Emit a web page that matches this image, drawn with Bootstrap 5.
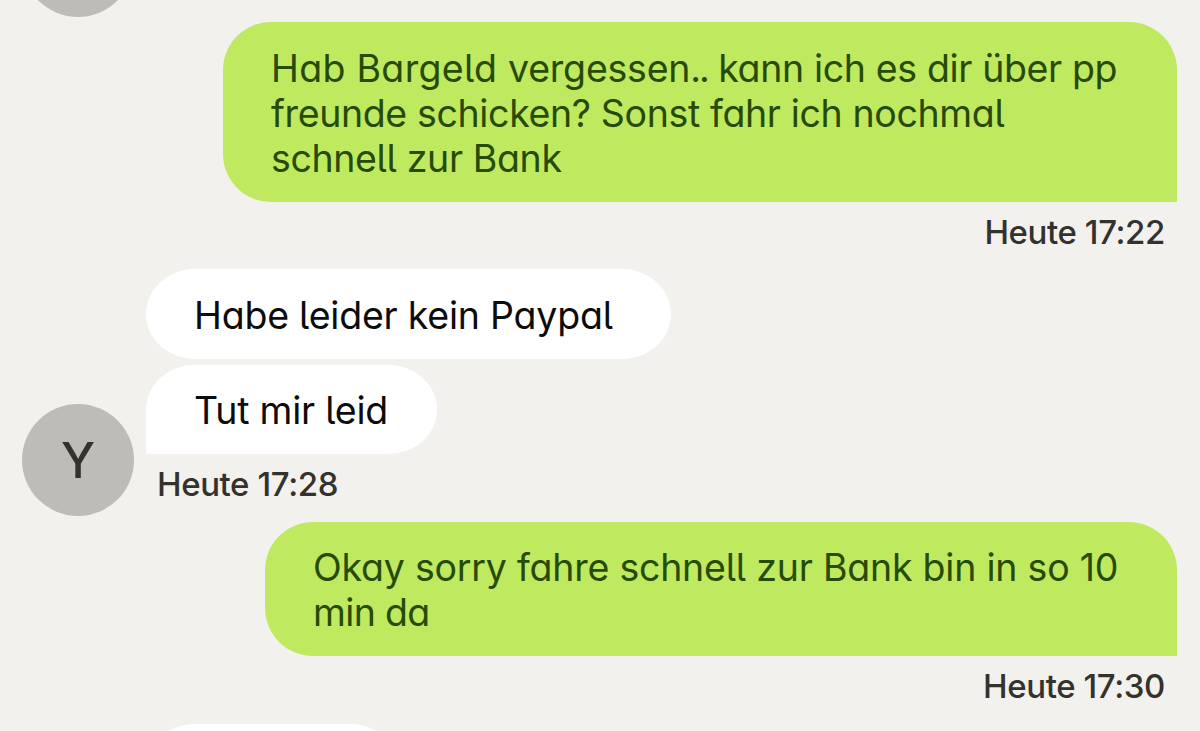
<!DOCTYPE html>
<html lang="de">
<head>
<meta charset="utf-8">
<meta name="viewport" content="width=device-width, initial-scale=1">
<title>Chat</title>
<link href="https://cdn.jsdelivr.net/npm/bootstrap@5.3.0/dist/css/bootstrap.min.css" rel="stylesheet">
<style>
body{background:#f3f1ed;font-family:Inter,"Liberation Sans",sans-serif;font-feature-settings:"cv11","cv05"}
.chat{height:731px;padding:0 23px 0 22px}
.avatar{width:112px;height:112px;background:#bdbcb7;color:#33322d;font-size:49px;font-weight:500;line-height:1}
.avatar-prev{margin-top:-95px;margin-bottom:5px}
.bubble{font-size:37.5px;font-weight:400;line-height:45px;letter-spacing:-.22px;white-space:nowrap;flex-shrink:0}
.sent{background:#bfe95f;color:#274b06;padding:23px 48px 21px;border-radius:48px 48px 0 48px}
.sent-long{width:954px;padding:24px 48px 21px}
.sent-short{width:912px;margin-top:6px}
.received{background:#fff;color:#0c0c0c;padding:24px 48px 21px;border-radius:49px/45px}
.received-first{width:525px}
.received-last{width:291px;margin-top:6px;padding-top:23px;border-bottom-left-radius:0}
.received-next{width:253px;height:90px;margin:18px 0 0 124px}
.stamp{font-size:33px;font-weight:500;line-height:40px;letter-spacing:-.4px;color:#33322d;margin-top:10px;padding:0 12px 0 11px}
.thread{margin-top:17px;gap:12px}
.thread-body{padding-bottom:12px}
.loose{letter-spacing:.3px}
.dots{letter-spacing:-2px}
.tight{letter-spacing:-.36px}
.tighter{letter-spacing:-.65px}
</style>
</head>
<body>
<main class="chat d-flex flex-column overflow-hidden">
  <div class="avatar avatar-prev rounded-circle flex-shrink-0"></div>

  <div class="bubble sent sent-long align-self-end"><span class="loose">Hab Bargeld </span>vergessen<span class="dots">..</span> <span class="tight">kann ich es dir über pp</span><br><span class="tight">freunde schicken? Sonst fahr ich nochmal</span><br><span class="tight">schnell zur Bank</span></div>
  <div class="stamp align-self-end">Heute 17:22</div>

  <div class="thread d-flex align-items-end flex-shrink-0">
    <div class="avatar rounded-circle d-flex align-items-center justify-content-center flex-shrink-0">Y</div>
    <div class="thread-body d-flex flex-column">
      <div class="bubble received received-first">Habe leider kein Paypal</div>
      <div class="bubble received received-last">Tut mir leid</div>
      <div class="stamp">Heute 17:28</div>
    </div>
  </div>

  <div class="bubble sent sent-short align-self-end">Okay sorry fahre schnell zur Bank bin in so 10<br><span class="tighter">min da</span></div>
  <div class="stamp align-self-end">Heute 17:30</div>

  <div class="bubble received received-next"></div>
</main>
<script src="https://cdn.jsdelivr.net/npm/bootstrap@5.3.0/dist/js/bootstrap.bundle.min.js"></script>
</body>
</html>
